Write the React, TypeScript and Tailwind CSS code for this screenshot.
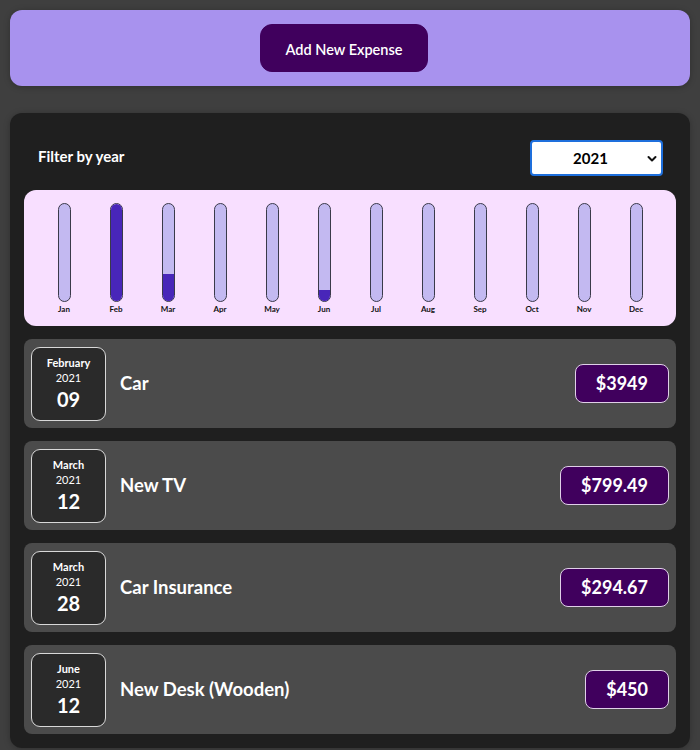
import React from "react";

const months = ["Jan","Feb","Mar","Apr","May","Jun","Jul","Aug","Sep","Oct","Nov","Dec"];
const expenses = [
  { month: "February", year: "2021", day: "09", title: "Car", amount: 3949, m: 1 },
  { month: "March", year: "2021", day: "12", title: "New TV", amount: 799.49, m: 2 },
  { month: "March", year: "2021", day: "28", title: "Car Insurance", amount: 294.67, m: 2 },
  { month: "June", year: "2021", day: "12", title: "New Desk (Wooden)", amount: 450, m: 5 },
];

export default function App() {
  const totals = months.map((_, i) => expenses.filter(e => e.m === i).reduce((s, e) => s + e.amount, 0));
  const max = Math.max(...totals);
  return (
    <div className="min-h-screen bg-[#3f3f3f] p-[10px] text-white" style={{ fontFamily: 'Lato, "Noto Sans", sans-serif' }}>
      <div className="h-[76px] rounded-xl bg-[#a892ee] flex items-center justify-center shadow-[0_1px_6px_rgba(0,0,0,0.25)]">
        <button className="w-[168px] h-[48px] mr-[12px] pt-[3px] rounded-xl bg-[#40005d] text-white text-[14.5px] font-semibold border border-[#40005d]">Add New Expense</button>
      </div>
      <div className="mt-[27px] rounded-xl bg-[#1f1f1f] px-[14px] pt-[27px] pb-[14px] shadow-[0_1px_6px_rgba(0,0,0,0.25)]">
        <div className="flex items-center justify-between pl-[14px] pr-[13px] h-[36px]">
          <span className="text-[15px] font-bold pb-[4px]">Filter by year</span>
          <div className="relative w-[133px] h-[36px] rounded-[4px] border-2 border-[#1e6fdc] bg-white text-black flex items-center justify-center pr-[12px]">
            <span className="text-[15px] font-bold">2021</span>
            <svg className="absolute right-[4px] top-[13px]" width="10" height="8" viewBox="0 0 10 8" fill="none">
              <path d="M1.5 2l3.5 3.5L8.5 2" stroke="#111" strokeWidth="2" strokeLinecap="round" strokeLinejoin="round" />
            </svg>
          </div>
        </div>
        <div className="mt-[14px] h-[136px] rounded-xl bg-[#f8dfff] px-[14px] pt-[13px] grid grid-cols-12">
          {months.map((m, i) => {
            const pct = max > 0 ? (totals[i] / max) * 100 : 0;
            return (
              <div key={m} className="flex flex-col items-center">
                <div className="w-[13px] h-[99px] rounded-full border border-[#3a3a4a] bg-[#c3b9f1] overflow-hidden flex flex-col justify-end">
                  <div className="bg-[#4826b9] w-full" style={{ height: `${pct}%` }} />
                </div>
                <span className="text-[8px] font-bold text-[#111] leading-none mt-[3px]">{m}</span>
              </div>
            );
          })}
        </div>
        <div className="mt-[13px] flex flex-col gap-[13px]">
          {expenses.map((e, i) => (
            <div key={i} className="h-[89px] rounded-lg bg-[#4b4b4b] flex items-center pl-[7px] pr-[7px]">
              <div className="w-[75px] h-[74px] rounded-[9px] border border-[#d8d8d8] bg-[#2a2a2a] flex flex-col items-center justify-center">
                <span className="text-[11px] font-bold leading-[15px]">{e.month}</span>
                <span className="text-[11px] leading-[15px]">{e.year}</span>
                <span className="text-[20px] font-bold leading-[28px]">{e.day}</span>
              </div>
              <div className="ml-[14px] flex-1 text-[18.5px] font-bold">{e.title}</div>
              <div className="h-[39px] px-[20px] rounded-lg border border-[#e0d0e8] bg-[#40005d] flex items-center text-[18px] font-bold">
                ${e.amount}
              </div>
            </div>
          ))}
        </div>
      </div>
    </div>
  );
}
